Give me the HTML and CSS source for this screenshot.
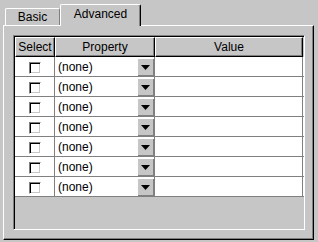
FILE: index.html
```html
<!DOCTYPE html>
<html lang="en">
<head>
    <meta charset="UTF-8">
    <title>Properties</title>
    <link rel="stylesheet" href="styles.css">
</head>
<body>
    <div class="tabs">
        <div class="tab">Basic</div>
        <div class="tab tab-active">Advanced</div>
    </div>

    <div class="panel">
        <div class="scroll">
            <div class="table-head">
                <div class="th col-select">Select</div>
                <div class="th col-prop">Property</div>
                <div class="th col-value">Value</div>
            </div>

            <div class="row">
                <div class="td col-select"><span class="check"></span></div>
                <div class="td col-prop"><span class="combo-text">(none)</span><span class="combo-btn"><svg width="9" height="5" viewBox="0 0 9 5"><polygon points="0,0 9,0 4.5,5" fill="#000"/></svg></span></div>
                <div class="td col-value"></div>
            </div>
            <div class="row">
                <div class="td col-select"><span class="check"></span></div>
                <div class="td col-prop"><span class="combo-text">(none)</span><span class="combo-btn"><svg width="9" height="5" viewBox="0 0 9 5"><polygon points="0,0 9,0 4.5,5" fill="#000"/></svg></span></div>
                <div class="td col-value"></div>
            </div>
            <div class="row">
                <div class="td col-select"><span class="check"></span></div>
                <div class="td col-prop"><span class="combo-text">(none)</span><span class="combo-btn"><svg width="9" height="5" viewBox="0 0 9 5"><polygon points="0,0 9,0 4.5,5" fill="#000"/></svg></span></div>
                <div class="td col-value"></div>
            </div>
            <div class="row">
                <div class="td col-select"><span class="check"></span></div>
                <div class="td col-prop"><span class="combo-text">(none)</span><span class="combo-btn"><svg width="9" height="5" viewBox="0 0 9 5"><polygon points="0,0 9,0 4.5,5" fill="#000"/></svg></span></div>
                <div class="td col-value"></div>
            </div>
            <div class="row">
                <div class="td col-select"><span class="check"></span></div>
                <div class="td col-prop"><span class="combo-text">(none)</span><span class="combo-btn"><svg width="9" height="5" viewBox="0 0 9 5"><polygon points="0,0 9,0 4.5,5" fill="#000"/></svg></span></div>
                <div class="td col-value"></div>
            </div>
            <div class="row">
                <div class="td col-select"><span class="check"></span></div>
                <div class="td col-prop"><span class="combo-text">(none)</span><span class="combo-btn"><svg width="9" height="5" viewBox="0 0 9 5"><polygon points="0,0 9,0 4.5,5" fill="#000"/></svg></span></div>
                <div class="td col-value"></div>
            </div>
            <div class="row">
                <div class="td col-select"><span class="check"></span></div>
                <div class="td col-prop"><span class="combo-text">(none)</span><span class="combo-btn"><svg width="9" height="5" viewBox="0 0 9 5"><polygon points="0,0 9,0 4.5,5" fill="#000"/></svg></span></div>
                <div class="td col-value"></div>
            </div>
        </div>
    </div>
</body>
</html>
```

FILE: styles.css
```css
* {
    box-sizing: border-box;
}

body {
    margin: 0;
    width: 318px;
    height: 242px;
    background-color: #c6c6c6;
    font-family: "Liberation Sans", Arial, sans-serif;
    font-size: 12px;
    color: #000;
    overflow: hidden;
}

/* tab strip */
.tabs {
    display: flex;
    align-items: flex-end;
    height: 25px;
    padding-left: 5px;
}

.tab {
    position: relative;
    width: 55px;
    height: 17px;
    line-height: 16px;
    text-align: center;
    border-top: 1px solid #fff;
    border-left: 1px solid #fff;
    border-right: 1px solid #808080;
    border-top-left-radius: 2px;
    border-top-right-radius: 2px;
}

.tab-active {
    z-index: 1;
    width: 81px;
    height: 22px;
    line-height: 19px;
    margin-bottom: -1px;
    background-color: #c6c6c6;
    border-right: 1px solid #000;
    box-shadow: inset -1px 0 0 #808080;
}

/* tab body */
.panel {
    margin-left: 3px;
    width: 311px;
    height: 215px;
    padding: 9px 0 0 9px;
    border: 1px solid;
    border-color: #fff #000 #000 #fff;
    box-shadow: inset -1px -1px 0 #808080;
}

.scroll {
    width: 292px;
    height: 195px;
    border: 1px solid;
    border-color: #808080 #fff #fff #808080;
    box-shadow: inset 1px 1px 0 #000;
    padding: 1px 0 0 1px;
}

.table-head,
.row {
    display: flex;
}

.col-select { width: 40px; }
.col-prop { width: 100px; }
.col-value { width: 148px; }

.th {
    height: 20px;
    line-height: 18px;
    text-align: center;
    border: 1px solid;
    border-color: #fff #000 #000 #fff;
    box-shadow: inset -1px -1px 0 #808080;
}

.row {
    height: 20px;
    background-color: #fff;
    border-bottom: 1px solid #808080;
}

.td {
    display: flex;
    align-items: center;
    border-right: 1px solid #808080;
}

.td.col-select {
    justify-content: center;
}

.check {
    width: 12px;
    height: 12px;
    margin-top: 2px;
    background-color: #fff;
    border: 1px solid;
    border-color: #808080 #fff #fff #808080;
    box-shadow: inset 1px 1px 0 #000, inset -1px -1px 0 #c6c6c6;
}

.combo-text {
    flex: 1;
    padding-left: 3px;
}

.combo-btn {
    align-self: flex-end;
    display: flex;
    align-items: center;
    justify-content: center;
    width: 16px;
    height: 17px;
    background-color: #c6c6c6;
    border-right: 1px solid #808080;
    border-bottom: 1px solid #808080;
}
```
